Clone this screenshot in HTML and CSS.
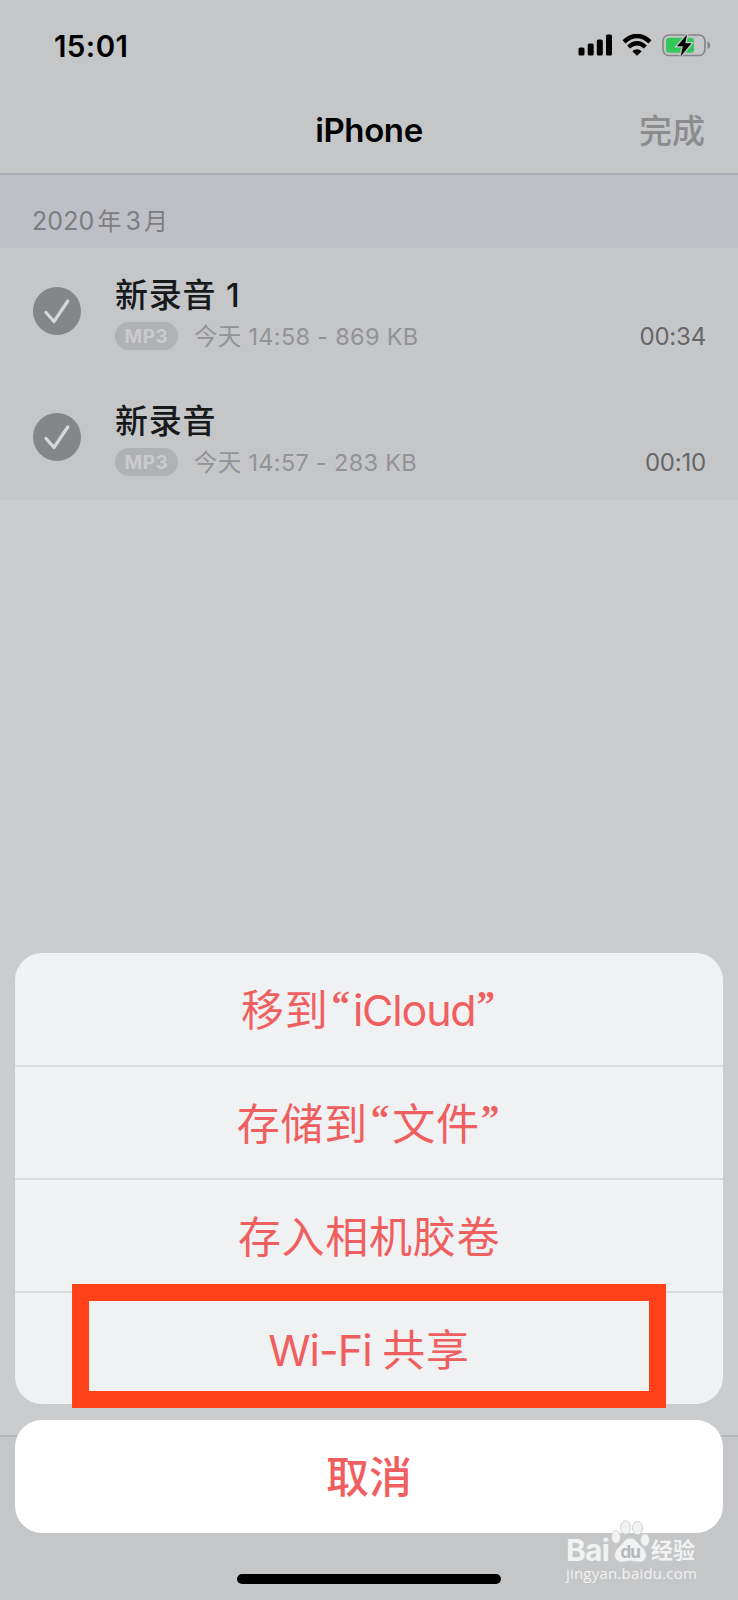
FILE: index.html
```html
<!DOCTYPE html>
<html lang="zh-CN">
<head>
    <meta charset="UTF-8">
    <meta name="viewport" content="width=device-width, initial-scale=1.0">
    <title>iPhone</title>
    <link rel="stylesheet" href="styles.css">
</head>
<body>
    <div class="screen">
        <div class="status-bar">
            <span class="time">15:01</span>
            <div class="status-icons">
                <!-- Signal -->
                <svg width="36" height="22" viewBox="0 0 36 22">
                    <rect x="0.5" y="13.5" width="6" height="8" rx="1.6"/>
                    <rect x="9.7" y="9.5" width="6" height="12" rx="1.6"/>
                    <rect x="18.8" y="5.5" width="6" height="16" rx="1.6"/>
                    <rect x="28" y="0.5" width="6" height="21" rx="1.6"/>
                </svg>
                <!-- Wifi -->
                <svg class="wifi" width="30" height="22" viewBox="0 0 30 22">
                    <path d="M2 7.8 Q15 -3.8 28 7.8" fill="none" stroke="#000" stroke-width="4.4"/>
                    <path d="M6.6 13 Q15 5.4 23.4 13" fill="none" stroke="#000" stroke-width="4.2"/>
                    <path d="M10.3 17.3 Q15 13 19.7 17.3 L15 21.8 Z"/>
                </svg>
                <!-- Battery -->
                <svg class="battery" width="49" height="24" viewBox="0 0 49 24">
                    <rect x="1" y="2" width="42" height="20.5" rx="6" fill="none" stroke="#858688" stroke-width="1.7"/>
                    <path d="M45.5 8.6 Q48.2 9.5 48.2 12.2 Q48.2 15 45.5 15.9 Z" fill="#858688"/>
                    <rect x="4" y="4.7" width="28" height="15" rx="3" fill="#34c759"/>
                    <path d="M25 1.5 L15 13.2 H20.8 L18.6 23.5 L29.5 10.3 H23.3 Z" stroke="#c5c6c8" stroke-width="2.6" paint-order="stroke"/>
                </svg>
            </div>
        </div>

        <header class="nav">
            <h1>iPhone</h1>
            <span class="done">完成</span>
        </header>

        <div class="section-title"><span>2020</span><span class="cn">年</span><span>3</span><span class="cn">月</span></div>

        <ul class="list">
            <li>
                <svg class="check" width="48" height="48" viewBox="0 0 48 48">
                    <circle cx="24" cy="24" r="24" fill="#858688"/>
                    <path d="M13 25.5 L21 34.5 L34.8 14" fill="none" stroke="#d6d7d8" stroke-width="3.2" stroke-linecap="round" stroke-linejoin="round"/>
                </svg>
                <div class="info">
                    <p class="name">新录音 1</p>
                    <div class="meta">
                        <span class="badge">MP3</span>
                        <span class="detail">今天 14:58 - 869 KB</span>
                    </div>
                </div>
                <span class="duration">00:34</span>
            </li>
            <li>
                <svg class="check" width="48" height="48" viewBox="0 0 48 48">
                    <circle cx="24" cy="24" r="24" fill="#858688"/>
                    <path d="M13 25.5 L21 34.5 L34.8 14" fill="none" stroke="#d6d7d8" stroke-width="3.2" stroke-linecap="round" stroke-linejoin="round"/>
                </svg>
                <div class="info">
                    <p class="name">新录音</p>
                    <div class="meta">
                        <span class="badge">MP3</span>
                        <span class="detail">今天 14:57 - 283 KB</span>
                    </div>
                </div>
                <span class="duration">00:10</span>
            </li>
        </ul>

        <div class="toolbar"></div>

        <!-- Action sheet over the list -->
        <div class="sheet">
            <div class="actions">
                <button>移到<span class="quote open">“</span><span class="icloud">iCloud</span><span class="quote close">”</span></button>
                <button>存储到<span class="quote open">“</span>文件<span class="quote close">”</span></button>
                <button>存入相机胶卷</button>
                <button><span class="wifi-share">Wi-Fi</span> 共享</button>
            </div>
            <button class="cancel">取消</button>
        </div>

        <div class="highlight"></div>
        <div class="home-indicator"></div>

        <div class="watermark">
            <div class="logo">
                <span class="wm-bai">Bai</span>
                <!-- Paw -->
                <svg width="40" height="44" viewBox="0 0 40 44">
                    <g fill="#f1f2f2" stroke="#d0d1d2" stroke-width="1">
                        <ellipse cx="5" cy="17" rx="4.4" ry="6.3"/>
                        <ellipse cx="14.5" cy="7.5" rx="5" ry="6.7"/>
                        <ellipse cx="26.5" cy="8" rx="5" ry="6.7"/>
                        <ellipse cx="34" cy="20" rx="4.4" ry="6.3"/>
                        <path d="M19 18 C14 18 12 23 8 27 C1 33 3 42 11 42 C15 42 16 41 19 41 C23 41 24 42 28 42 C36 42 38 33 31 27 C26 23 25 18 19 18 Z"/>
                    </g>
                    <text class="wm-du" x="9.5" y="38">du</text>
                </svg>
                <span class="wm-cn">经验</span>
            </div>
            <p>jingyan.baidu.com</p>
        </div>
    </div>
</body>
</html>
```
FILE: styles.css
```css
* {
    margin: 0;
    padding: 0;
    box-sizing: border-box;
    font-family: Inter, 'Noto Sans CJK SC', sans-serif;
}
body {
    background: #cbccce;
}
.screen {
    position: relative;
    display: flex;
    flex-direction: column;
    width: 738px;
    height: 1600px;
    overflow: hidden;
    background: #cbccce;
}
.status-bar {
    display: flex;
    justify-content: space-between;
    align-items: center;
    height: 90px;
    padding: 0 28px 0 54px;
    background: #c5c6c8;
}
.time {
    padding-top: 1px;
    font-size: 29.5px;
    font-weight: 600;
    letter-spacing: 0.4px;
}
.status-icons {
    display: flex;
    align-items: center;
}
.wifi {
    margin-left: 8px;
}
.battery {
    margin-left: 10px;
    margin-right: -1px;
}
.nav {
    display: grid;
    grid-template-columns: 1fr auto 1fr;
    align-items: center;
    height: 85px;
    padding: 0 33px 3px;
    background: #c5c6c8;
    border-bottom: 2px solid #abacb1;
}
.nav h1 {
    grid-column: 2;
    font-size: 33px;
    line-height: 40px;
    font-weight: 600;
    letter-spacing: -0.4px;
}
.done {
    justify-self: end;
    padding-top: 2px;
    font-size: 33px;
    line-height: 40px;
    font-weight: 500;
    color: #8b8c8e;
}
.section-title {
    display: flex;
    align-items: baseline;
    height: 73px;
    padding: 28px 32px 0;
    background: #bfc0c5;
    color: #7c7d81;
    font-size: 25px;
    line-height: 36px;
    letter-spacing: 0.1px;
}
.section-title .cn {
    margin: 0 4px 0 3px;
    font-size: 24px;
}
.section-title .cn:last-child {
    margin-left: 3px;
}
.list {
    list-style: none;
    background: #c5c6c8;
}
.list li {
    display: flex;
    height: 126px;
    padding: 0 32px 0 33px;
}
.check {
    margin-top: 39px;
}
.info {
    flex: 1;
    margin-left: 34px;
    padding-top: 27px;
}
.name {
    font-size: 33px;
    line-height: 40px;
    font-weight: 500;
    letter-spacing: 0.8px;
    color: #18191b;
}
.meta {
    display: flex;
    align-items: flex-start;
    margin-top: 7px;
}
.badge {
    width: 63px;
    height: 28px;
    border-radius: 14px;
    background: #b0b1b3;
    color: #cacbcd;
    font-size: 19px;
    line-height: 29px;
    font-weight: 700;
    text-align: center;
    letter-spacing: 0.5px;
}
.detail {
    margin-left: 16px;
    font-size: 23.5px;
    line-height: 28px;
    letter-spacing: 0.3px;
    padding-top: 1px;
    color: #929397;
}
.duration {
    margin-top: 75px;
    font-size: 24px;
    line-height: 28px;
    letter-spacing: -0.2px;
    color: #66676a;
}
.toolbar {
    height: 165px;
    margin-top: auto;
    background: #c5c6c8;
    border-top: 2px solid #b5b6b9;
}
.sheet {
    position: absolute;
    left: 15px;
    bottom: 67px;
    width: 708px;
}
.sheet button {
    display: block;
    width: 100%;
    height: 113px;
    border: none;
    background: transparent;
    color: #f05f5f;
    font-size: 43px;
    line-height: 56px;
    letter-spacing: 0.7px;
}
.actions {
    height: 451px;
    margin-bottom: 16px;
    border-radius: 27px;
    background: #eff1f3;
    overflow: hidden;
}
.actions button:not(:last-child) {
    padding-top: 2px;
    border-bottom: 2px solid #d9dbdd;
}
.actions button:first-child {
    height: 114px;
}
.quote {
    font-family: 'Liberation Serif', serif;
    font-weight: 700;
    font-size: 37px;
    line-height: 0;
    vertical-align: 9px;
    letter-spacing: 0;
}
.open {
    margin: 0 3px 0 3px;
}
.close {
    margin: 0 2px 0 1px;
}
.icloud {
    letter-spacing: -1.2px;
}
.wifi-share {
    letter-spacing: -1px;
    margin-right: -2px;
}
.sheet .cancel {
    border-radius: 27px;
    background: #fff;
    font-weight: 500;
    letter-spacing: 0;
}
.highlight {
    position: absolute;
    left: 72px;
    top: 1284px;
    width: 594px;
    height: 124px;
    border: 17px solid #ff4019;
}
.home-indicator {
    position: absolute;
    left: 237px;
    bottom: 16px;
    width: 264px;
    height: 10px;
    border-radius: 5px;
    background: #000;
}
/* Watermark */
.watermark {
    position: absolute;
    left: 566px;
    top: 1520px;
    width: 140px;
    color: #f1f2f2;
}
.logo {
    display: flex;
    align-items: flex-end;
    height: 44px;
}
.wm-bai {
    width: 45px;
    font-size: 30px;
    line-height: 28px;
    font-weight: 700;
    letter-spacing: -0.8px;
}
.wm-du {
    fill: #b5b6b9;
    font-size: 17px;
    font-weight: 700;
    letter-spacing: -1px;
}
.wm-cn {
    font-size: 22px;
    line-height: 28px;
    font-weight: 700;
}
.watermark p {
    font-family: 'Open Sans', sans-serif;
    font-size: 15px;
    line-height: 18px;
    letter-spacing: 0.2px;
}
```
